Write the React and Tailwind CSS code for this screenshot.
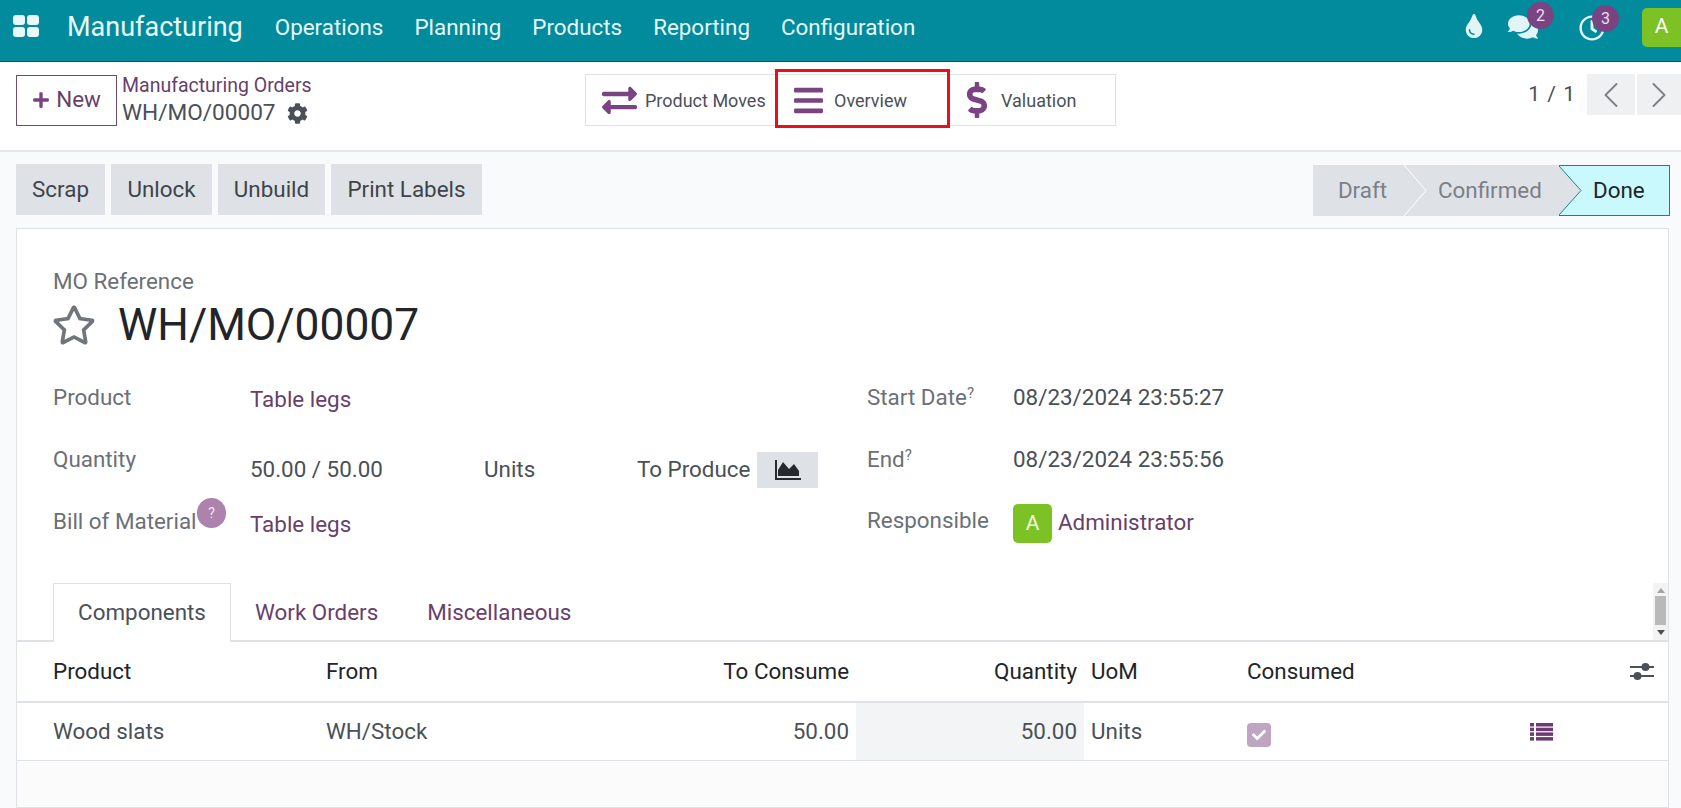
import React from 'react';
import { ChevronLeft, ChevronRight } from 'lucide-react';
import {
  FaTint, FaComments, FaRegClock, FaPlus, FaCog, FaExchangeAlt, FaBars,
  FaDollarSign, FaRegStar, FaCheck,
} from 'react-icons/fa';

const navItems = ['Operations', 'Planning', 'Products', 'Reporting', 'Configuration'];

const Badge = ({ children, className }) => (
  <span className={`absolute -top-[10px] w-[27px] h-[27px] rounded-full bg-[#7a4382] text-[#f0dff0] text-[16px] flex items-center justify-center ${className}`}>
    {children}
  </span>
);

const Chevron = ({ stroke }) => (
  <svg className="absolute left-0 top-0 h-full w-[23px]" viewBox="0 0 23 51" preserveAspectRatio="none">
    <polygon points="0,0 22,25.5 0,51" fill="#dee2e6" />
    <polyline points="0,0 22,25.5 0,51" fill="none" stroke={stroke} strokeWidth="1" />
  </svg>
);

const ToolButton = ({ children, className }) => (
  <button className={`h-[51px] bg-[#dee2e6] text-[#3f444b] text-[22.4px] flex items-center justify-center ${className}`}>
    {children}
  </button>
);

const StatButton = ({ icon, label, className, children }) => (
  <div className={`relative h-[50px] flex items-center text-[#4b5058] text-[18px] ${className}`}>
    {icon}
    <span>{label}</span>
    {children}
  </div>
);

const App = () => {
  return (
    <div className="h-[808px] w-[1681px] overflow-hidden flex flex-col bg-[#f9fafb] text-[#495057] text-[22.4px] font-['Roboto',sans-serif]">
      {/* Top bar */}
      <header className="h-[62px] shrink-0 bg-[#018b9c] border-b border-[#02525c] flex items-center text-[#e8f8f9]">
        <div className="ml-[13px] w-[26px] grid grid-cols-2 gap-[2px] -mt-[9px]">
          <span className="h-[10px] rounded-[3px] bg-[#e9f8f9]" />
          <span className="h-[10px] rounded-[3px] bg-[#e9f8f9]" />
          <span className="h-[10px] rounded-[3px] bg-[#e9f8f9]" />
          <span className="h-[10px] rounded-[3px] bg-[#e9f8f9]" />
        </div>
        <span className="ml-[28px] text-[27px] leading-none -mt-[6px]">Manufacturing</span>
        <nav className="ml-[32px] flex gap-[31px] text-[22.4px] -mt-[6px]">
          {navItems.map(item => <span key={item}>{item}</span>)}
        </nav>
        <div className="ml-auto flex items-center">
          <FaTint size={24} className="text-[#e2f5f6] -mt-[9px]" />
          <div className="relative ml-[22px] -mt-[7px]">
            <FaComments size={30} className="text-[#e2f5f6]" />
            <Badge className="-right-[16px]">2</Badge>
          </div>
          <div className="relative ml-[41px] -mt-[5px]">
            <FaRegClock size={26} className="text-[#e2f5f6]" />
            <Badge className="-right-[14px]">3</Badge>
          </div>
          <div className="ml-[37px] w-[39px] h-[39px] -mt-[7px] rounded-l-[5px] bg-[#7cc225] text-white text-[21px] flex items-center justify-center">A</div>
        </div>
      </header>

      {/* Control panel */}
      <div className="h-[90px] shrink-0 bg-white border-b-2 border-[#e3e6ea] flex items-start relative">
        <button className="mt-[13px] ml-[16px] w-[101px] h-[51px] pb-[2px] border border-[#714b67] flex items-center justify-center gap-[6px] text-[#683f6c] text-[22.4px]">
          <FaPlus size={18} className="text-[#7a4382]" />
          New
        </button>
        <div className="ml-[5px] mt-[11px]">
          <div className="text-[#683f6c] text-[19.5px] leading-[26px]">Manufacturing Orders</div>
          <div className="text-[#495057] text-[22.6px] leading-[28px] flex items-center gap-[11px]">
            WH/MO/00007
            <FaCog size={21} className="text-[#495057]" />
          </div>
        </div>
        <div className="absolute left-[585px] top-[12px] w-[531px] flex border border-[#dee2e6] bg-white">
          <StatButton className="w-[190px] pl-[16px] border-r border-[#dee2e6]" label="Product Moves" icon={<FaExchangeAlt size={35} className="mr-[8px] text-[#7a4382]" />} />
          <StatButton className="w-[173px] pl-[16px]" label="Overview" icon={<FaBars size={33} className="mr-[9px] text-[#7a4382]" />}>
            <span className="absolute -left-[1px] -top-[6px] w-[175px] h-[59px] border-[3px] border-[#e8101a]" />
          </StatButton>
          <StatButton className="flex-1 pl-[10px]" label="Valuation" icon={<FaDollarSign size={36} className="mr-[6px] text-[#7a4382]" />} />
        </div>
        <div className="ml-auto flex items-start">
          <span className="mt-[17px] text-[21px] tracking-[1px] text-[#495057]">1 / 1</span>
          <button className="ml-[11px] mt-[12px] w-[48px] h-[41px] bg-[#eff0f1] flex items-center justify-center">
            <ChevronLeft size={44} strokeWidth={1} className="text-[#7b7f84]" />
          </button>
          <button className="ml-[2px] mt-[12px] w-[44px] h-[41px] bg-[#eff0f1] flex items-center justify-center">
            <ChevronRight size={44} strokeWidth={1} className="text-[#7b7f84]" />
          </button>
        </div>
      </div>

      {/* Buttons and status */}
      <div className="h-[76px] shrink-0 pl-[16px] pr-[11px] pt-[12px] flex items-start">
        <div className="flex gap-[6px]">
          <ToolButton className="w-[89px]">Scrap</ToolButton>
          <ToolButton className="w-[101px]">Unlock</ToolButton>
          <ToolButton className="w-[107px]">Unbuild</ToolButton>
          <ToolButton className="w-[151px]">Print Labels</ToolButton>
        </div>
        <div className="ml-auto mt-[1px] h-[51px] flex">
          <div className="w-[91px] bg-[#dee2e6] text-[#7b8087] flex items-center justify-center pl-[8px]">Draft</div>
          <div className="relative w-[155px] bg-[#dee2e6] text-[#7b8087] flex items-center pl-[34px]">
            <Chevron stroke="#ffffff" />
            Confirmed
          </div>
          <div className="relative w-[111px] bg-[#c9f9fd] border-y border-r border-[#1b7f8c] text-[#212529] flex items-center pl-[34px]">
            <Chevron stroke="#1b7f8c" />
            Done
          </div>
        </div>
      </div>

      {/* Sheet */}
      <main className="ml-[16px] mr-[12px] flex-1 min-h-0 bg-white border border-[#dee2e6] flex flex-col">
        <div className="pl-[36px] pt-[40px]">
          <div className="leading-[24px] text-[#6b7077]">MO Reference</div>
          <div className="flex items-center mt-[6px] h-[52px]">
            <FaRegStar size={44} className="text-[#6f757b] -ml-[1px]" />
            <h1 className="ml-[22px] text-[44.3px] leading-none text-[#212529]">WH/MO/00007</h1>
          </div>
          <div className="mt-[16px] flex">
            <div className="w-[766px] shrink-0">
              <div className="h-[62px] flex items-center">
                <span className="w-[197px] shrink-0 text-[#6b7077]">Product</span>
                <span className="pt-[4px] text-[#683f6c]">Table legs</span>
              </div>
              <div className="h-[62px] flex items-center">
                <span className="w-[197px] shrink-0 text-[#6b7077]">Quantity</span>
                <div className="flex items-center pt-[20px] whitespace-nowrap">
                  <span className="w-[234px] shrink-0">50.00 / 50.00</span>
                  <span className="w-[153px] shrink-0">Units</span>
                  <span>To Produce</span>
                  <span className="ml-[7px] w-[61px] h-[36px] shrink-0 bg-[#dee2e6] flex items-center justify-center">
                    <svg width="26" height="20" viewBox="0 0 26 20" fill="#262a2e">
                      <rect x="0" y="0" width="2" height="20" />
                      <rect x="0" y="18" width="26" height="2" />
                      <polygon points="3,16 3,10 8,2 14,9 19,4 24,11 24,16" />
                    </svg>
                  </span>
                </div>
              </div>
              <div className="h-[62px] flex items-center">
                <span className="w-[197px] shrink-0 text-[#6b7077] relative">
                  Bill of Material
                  <span className="absolute left-[144px] -top-[7px] w-[29px] h-[30px] rounded-full bg-[#ad82ad] text-[#f3e8f3] text-[14px] flex items-center justify-center">?</span>
                </span>
                <span className="pt-[6px] text-[#683f6c]">Table legs</span>
              </div>
            </div>
            <div className="ml-[48px]">
              <div className="h-[62px] flex items-center">
                <span className="w-[146px] text-[#6b7077]">Start Date<sup className="text-[15px]">?</sup></span>
                <span>08/23/2024 23:55:27</span>
              </div>
              <div className="h-[62px] flex items-center">
                <span className="w-[146px] text-[#6b7077]">End<sup className="text-[15px]">?</sup></span>
                <span>08/23/2024 23:55:56</span>
              </div>
              <div className="h-[62px] flex items-center">
                <span className="w-[146px] pb-[2px] text-[#6b7077]">Responsible</span>
                <span className="w-[39px] h-[39px] mt-[3px] rounded-[5px] bg-[#7cc225] text-[#eef9df] text-[21px] flex items-center justify-center">A</span>
                <span className="ml-[6px] pt-[2px] text-[#683f6c]">Administrator</span>
              </div>
            </div>
          </div>
        </div>

        {/* Tabs */}
        <div className="mt-[30px] h-[59px] shrink-0 pl-[36px] flex items-stretch border-b-2 border-[#dee2e6]">
          <div className="w-[178px] h-[59px] bg-white border border-b-0 border-[#dee2e6] flex items-center justify-center text-[#495057]">Components</div>
          <div className="ml-[24px] pt-[3px] flex items-center text-[#683f6c]">Work Orders</div>
          <div className="ml-[49px] pt-[3px] flex items-center text-[#683f6c]">Miscellaneous</div>
          <div className="ml-auto w-[15px] h-[57px] bg-[#f3f3f3] flex flex-col items-center justify-between py-[5px]">
            <span className="w-0 h-0 border-x-[4px] border-x-transparent border-b-[5px] border-b-[#a3a3a3]" />
            <span className="w-[11px] h-[29px] bg-[#b9b9b9] -mt-[2px]" />
            <span className="w-0 h-0 border-x-[4px] border-x-transparent border-t-[5px] border-t-[#505050]" />
          </div>
        </div>

        {/* Table */}
        <div className="h-[61px] shrink-0 pl-[36px] grid grid-cols-[273px_272px_258px_228px_156px_1fr] items-center border-b-2 border-[#dee2e6] text-[#212529]">
          <span>Product</span>
          <span>From</span>
          <span className="text-right pr-[7px]">To Consume</span>
          <span className="text-right pr-[7px]">Quantity</span>
          <span className="pl-[7px]">UoM</span>
          <div className="pl-[7px] flex items-center justify-between pr-[14px]">
            <span>Consumed</span>
            <svg width="24" height="19" viewBox="0 0 24 19" fill="#495057">
              <rect x="0" y="4" width="24" height="2" />
              <circle cx="15.5" cy="5" r="4" />
              <rect x="0" y="13" width="24" height="2" />
              <circle cx="7.5" cy="14" r="4" />
            </svg>
          </div>
        </div>
        <div className="h-[58px] shrink-0 bg-white pl-[36px] grid grid-cols-[273px_272px_258px_228px_156px_280px_1fr] items-center border-b border-[#dee2e6]">
          <span>Wood slats</span>
          <span>WH/Stock</span>
          <span className="text-right pr-[7px]">50.00</span>
          <span className="h-[57px] bg-[#f3f4f6] flex items-center justify-end pr-[7px]">50.00</span>
          <span className="pl-[7px]">Units</span>
          <div className="pl-[7px]">
            <span className="w-[24px] h-[24px] mt-[7px] rounded-[4px] bg-[#bfa5c2] flex items-center justify-center">
              <FaCheck size={14} className="text-white" />
            </span>
          </div>
          <svg className="ml-[10px]" width="23" height="18" viewBox="0 0 23 18" fill="#6d3a74">
            <rect x="0" y="0" width="4" height="3.5" />
            <rect x="6" y="0" width="17" height="3.5" />
            <rect x="0" y="4.7" width="4" height="3.5" />
            <rect x="6" y="4.7" width="17" height="3.5" />
            <rect x="0" y="9.4" width="4" height="3.5" />
            <rect x="6" y="9.4" width="17" height="3.5" />
            <rect x="0" y="14.1" width="4" height="3.5" />
            <rect x="6" y="14.1" width="17" height="3.5" />
          </svg>
        </div>
        <div className="flex-1 bg-[#fbfbfb]" />
      </main>
    </div>
  );
};

export default App;
